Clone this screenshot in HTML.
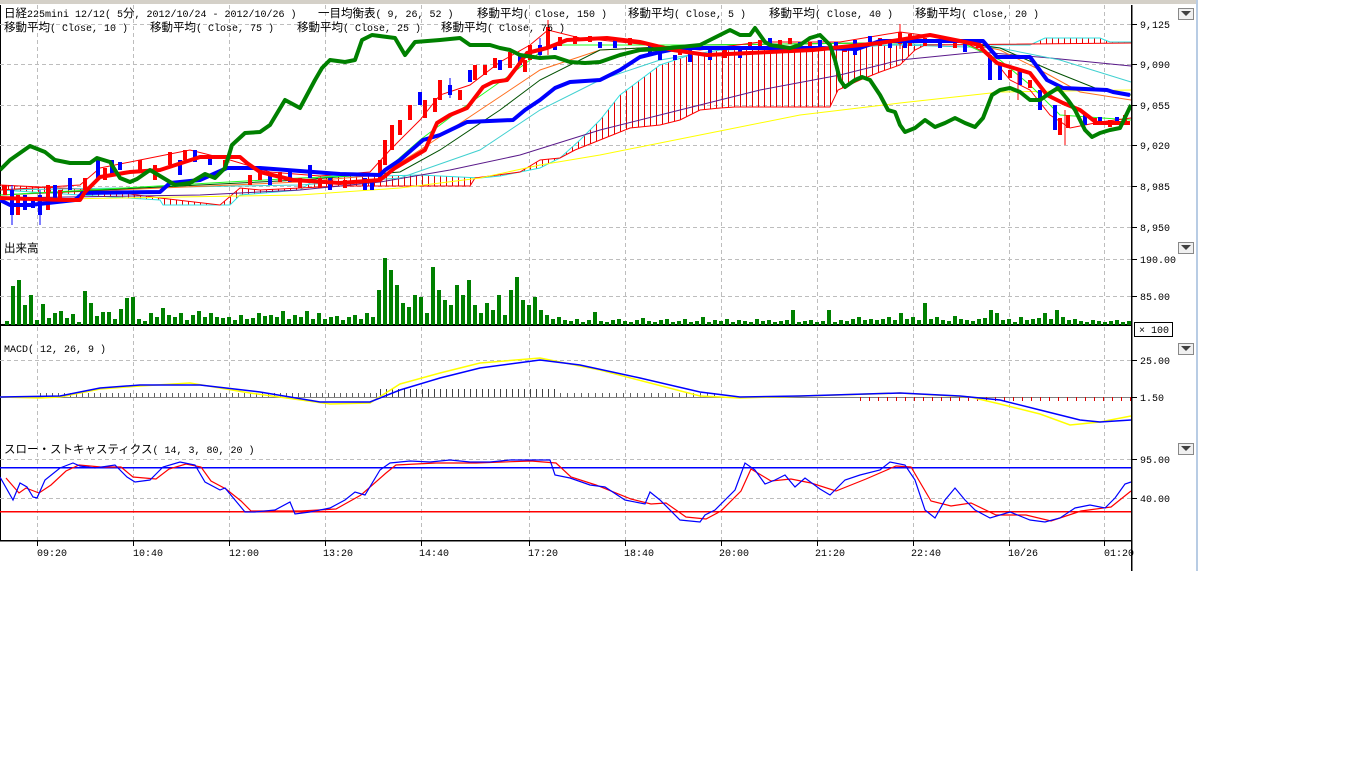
<!DOCTYPE html>
<html><head><meta charset="utf-8"><style>
html,body{margin:0;padding:0;background:#fff;width:1366px;height:768px;overflow:hidden}
svg{position:absolute;left:0;top:0}
.t{font-family:"Liberation Mono","Noto Sans CJK JP",monospace;font-size:10px;fill:#000}
.j{font-size:11.5px}
</style></head><body>
<svg width="1366" height="768" viewBox="0 0 1366 768" xmlns="http://www.w3.org/2000/svg">
<defs>
<pattern id="h" width="6" height="4" patternUnits="userSpaceOnUse"><rect x="2" y="0" width="1" height="4" fill="#e00000"/></pattern>
</defs>
<rect x="0" y="0" width="1196" height="4" fill="#d4d0c8"/>
<rect x="1196" y="0" width="2" height="571" fill="#b8cce4"/>
<rect x="0" y="5" width="1" height="536" fill="#000"/>
<g stroke="#bdbdbd" stroke-dasharray="4,3" stroke-width="1">
<path d="M0 24.5H1131M0 64.5H1131M0 105.5H1131M0 145.5H1131M0 186.5H1131M0 227.5H1131M0 259.5H1131M0 296.5H1131M0 360.5H1131M0 459.5H1131M0 498.5H1131"/>
<path d="M37.5 5V540M133.5 5V540M229.5 5V540M325.5 5V540M421.5 5V540M529.5 5V540M625.5 5V540M721.5 5V540M817.5 5V540M913.5 5V540M1009.5 5V540M1104.5 5V540"/>
</g>
<polygon fill="url(#h)" points="0,190 80,195 160,200 163,205 230,205 240,195 300,190 320,176 380,176 420,175 480,178 500,176 510,174 540,168 560,158 580,140 600,120 620,95 640,80 660,65 690,55 720,50 800,48 860,47 900,44 960,45 1000,45 1030,45 1045,38 1100,38 1110,42 1131,42 1131,43 925,45 915,50 900,65 880,72 860,80 838,90 830,107 735,107 720,108 700,110 680,120 660,125 630,128 600,140 575,150 560,158 540,160 520,172 475,178 470,186 340,186 300,188 260,190 240,188 220,205 160,198 100,190 0,185"/>
<polyline fill="none" stroke="#30e0e0" stroke-width="1" points="0,190 80,195 160,200 163,205 230,205 240,195 300,190 320,176 380,176 420,175 480,178 500,176 510,174 540,168 560,158 580,140 600,120 620,95 640,80 660,65 690,55 720,50 800,48 860,47 900,44 960,45 1000,45 1030,45 1045,38 1100,38 1110,42 1131,42"/>
<polyline fill="none" stroke="#f00" stroke-width="1" points="0,185 100,190 160,198 220,205 240,188 260,190 300,188 340,186 470,186 475,178 520,172 540,160 560,158 575,150 600,140 630,128 660,125 680,120 700,110 720,108 735,107 830,107 838,90 860,80 880,72 900,65 915,50 925,45 1131,43"/>
<g fill="none" stroke-width="1">
<polyline stroke="#ffff00" points="0,200 300,195 400,188 480,178 540,165 600,155 700,135 800,115 900,103 1000,92 1131,90"/>
<polyline stroke="#5a1a8a" points="0,198 200,195 300,190 380,182 450,170 520,155 600,130 680,110 760,90 840,75 900,60 980,52 1050,58 1131,66"/>
<polyline stroke="#40d0d0" points="0,190 300,185 400,178 480,150 540,110 600,80 660,60 720,50 900,45 1000,48 1060,60 1131,82"/>
<polyline stroke="#ff7020" points="0,195 300,182 380,175 420,150 480,110 540,70 600,50 700,45 960,42 1000,50 1040,70 1080,92 1131,100"/>
<polyline stroke="#005000" points="0,195 300,180 400,172 440,150 500,110 540,80 600,50 700,45 960,42 1000,48 1050,70 1100,90 1131,95"/>
<polyline stroke="#20ff20" points="0,195 300,178 380,175 420,140 460,110 510,75 550,45 700,45 960,42 1000,60 1030,85 1060,115 1131,120"/>
<polyline stroke="#f00" points="0,190 80,185 100,168 140,160 190,150 230,160 270,172 320,176 370,172 390,150 420,120 440,95 470,85 500,62 530,45 548,30 580,38 640,44 700,50 760,42 840,42 900,32 960,40 990,55 1010,80 1030,90 1050,115 1070,128 1100,122 1131,118"/>
</g>
<path fill="none" stroke="#0000ff" stroke-width="4" d="M12 190v25M25 195v15M33 200v8M40 195v20M55 185v15M70 178v12M98 160v18M112 160v15M120 162v8M180 160v15M195 150v12M210 155v10M270 175v10M290 170v12M310 165v13M330 178v12M365 178v12M372 182v8M420 92v13M450 85v10M470 70v12M500 60v10M520 55v10M540 45v10M555 45v5M600 42v6M615 40v8M650 43v12M660 48v12M675 55v5M690 50v12M710 50v10M740 48v10M770 38v7M800 42v8M820 40v6M836 42v8M855 40v15M870 36v6M890 42v6M905 40v8M940 42v6M965 42v10M990 55v25M1000 65v15M1020 70v15M1040 90v20M1055 105v25M1085 115v10M1100 117v8M1117 117v8"/>
<path fill="none" stroke="#0000ff" stroke-width="1" d="M12 185v40M40 190v35M450 78v20M540 38v20"/>
<path fill="none" stroke="#ff0000" stroke-width="4" d="M5 185v10M18 195v20M48 185v25M60 190v10M85 178v12M105 168v12M140 160v10M155 165v15M170 152v13M185 150v10M225 160v10M250 175v10M260 170v10M280 172v10M300 178v10M320 178v10M345 180v8M380 160v20M385 140v25M392 125v25M400 120v15M410 105v15M425 100v18M435 98v14M440 80v20M460 90v10M475 65v15M485 65v10M495 58v10M510 52v16M525 60v12M530 45v15M548 27v21M560 37v9M575 36v8M590 36v6M630 38v7M680 48v7M725 50v8M750 42v8M760 40v6M780 40v6M790 38v6M810 42v6M845 45v7M880 38v8M900 32v12M910 34v12M925 38v8M955 40v8M978 40v8M1010 70v8M1030 80v8M1060 118v17M1068 115v13M1095 118v7M1110 120v7M1125 115v10"/>
<path fill="none" stroke="#ff0000" stroke-width="1" d="M548 20v35M900 24v25M1065 110v35M1018 70v30"/>
<polyline fill="none" stroke="#0000ff" stroke-width="4" stroke-linejoin="round" points="0,200 10,205 30,205 75,200 83,193 160,192 170,183 200,180 227,168 260,168 340,174 380,175 385,170 400,160 423,140 440,135 467,122 513,120 525,110 540,100 555,88 570,82 600,80 620,70 640,57 660,52 680,48 820,48 857,49 880,41 983,41 997,57 1030,57 1047,80 1063,88 1107,90 1113,92 1130,95"/>
<polyline fill="none" stroke="#ff0000" stroke-width="4" stroke-linejoin="round" points="0,198 65,200 80,200 85,192 100,177 130,172 160,170 200,157 240,157 247,163 260,172 293,180 340,183 380,180 395,168 425,150 437,123 450,115 467,108 483,87 493,82 507,80 517,67 527,53 547,48 567,40 607,38 640,42 673,50 707,55 813,50 880,43 930,35 980,45 983,50 997,63 1030,73 1047,95 1063,103 1080,110 1097,123 1130,123"/>
<polyline fill="none" stroke="#008000" stroke-width="4" stroke-linejoin="round" points="0,170 10,160 30,146 45,152 55,160 70,163 90,163 97,158 110,162 120,178 130,182 137,179 150,170 160,176 175,185 190,183 205,174 215,178 225,168 232,145 245,133 260,132 270,125 285,100 300,108 315,80 322,68 330,60 345,62 355,60 362,40 372,35 395,38 405,55 415,42 440,40 460,38 470,45 490,45 500,48 510,50 520,55 540,58 555,57 570,62 585,63 600,62 620,55 640,50 660,49 700,45 730,30 740,35 750,35 755,28 765,42 770,45 790,48 800,45 810,38 820,35 830,45 835,60 840,80 845,87 855,80 862,77 870,80 880,95 888,110 895,112 900,125 905,132 915,128 925,120 935,127 945,123 955,118 965,123 975,127 983,118 992,95 1000,90 1010,88 1020,92 1030,100 1040,100 1050,93 1058,88 1068,100 1075,110 1085,130 1092,137 1100,133 1110,130 1120,128 1131,105"/>
<rect x="0" y="324" width="1131" height="2" fill="#000"/>
<path fill="none" stroke="#008000" stroke-width="4" d="M7 325v-4M13 325v-39M19 325v-45M25 325v-20M31 325v-30M37 325v-5M43 325v-21M49 325v-7M55 325v-12M61 325v-14M67 325v-7M73 325v-11M79 325v-3M85 325v-34M91 325v-22M97 325v-9M103 325v-13M109 325v-13M115 325v-6M121 325v-16M127 325v-27M133 325v-28M139 325v-6M145 325v-4M151 325v-12M157 325v-8M163 325v-17M169 325v-10M175 325v-8M181 325v-12M187 325v-5M193 325v-10M199 325v-14M205 325v-8M211 325v-12M217 325v-8M223 325v-7M229 325v-8M235 325v-5M241 325v-10M247 325v-6M253 325v-7M259 325v-12M265 325v-9M271 325v-10M277 325v-8M283 325v-14M289 325v-6M295 325v-10M301 325v-8M307 325v-14M313 325v-6M319 325v-12M325 325v-6M331 325v-8M337 325v-9M343 325v-5M349 325v-8M355 325v-10M361 325v-6M367 325v-12M373 325v-8M379 325v-35M385 325v-67M391 325v-55M397 325v-40M403 325v-22M409 325v-18M415 325v-30M421 325v-28M427 325v-12M433 325v-58M439 325v-35M445 325v-25M451 325v-20M457 325v-40M463 325v-30M469 325v-45M475 325v-20M481 325v-12M487 325v-22M493 325v-15M499 325v-30M505 325v-10M511 325v-35M517 325v-48M523 325v-25M529 325v-20M535 325v-28M541 325v-15M547 325v-10M553 325v-6M559 325v-8M565 325v-5M571 325v-4M577 325v-6M583 325v-3M589 325v-5M595 325v-13M601 325v-4M607 325v-3M613 325v-5M619 325v-6M625 325v-4M631 325v-3M637 325v-5M643 325v-7M649 325v-4M655 325v-3M661 325v-5M667 325v-6M673 325v-3M679 325v-4M685 325v-6M691 325v-3M697 325v-4M703 325v-8M709 325v-3M715 325v-5M721 325v-4M727 325v-6M733 325v-3M739 325v-5M745 325v-4M751 325v-3M757 325v-6M763 325v-4M769 325v-5M775 325v-3M781 325v-4M787 325v-5M793 325v-15M799 325v-3M805 325v-4M811 325v-5M817 325v-3M823 325v-4M829 325v-15M835 325v-3M841 325v-5M847 325v-4M853 325v-6M859 325v-8M865 325v-5M871 325v-6M877 325v-5M883 325v-6M889 325v-8M895 325v-5M901 325v-12M907 325v-6M913 325v-8M919 325v-5M925 325v-22M931 325v-6M937 325v-8M943 325v-5M949 325v-4M955 325v-9M961 325v-6M967 325v-5M973 325v-4M979 325v-6M985 325v-7M991 325v-15M997 325v-12M1003 325v-5M1009 325v-6M1015 325v-3M1021 325v-8M1027 325v-5M1033 325v-6M1039 325v-7M1045 325v-12M1051 325v-6M1057 325v-15M1063 325v-8M1069 325v-5M1075 325v-6M1081 325v-4M1087 325v-3M1093 325v-5M1099 325v-4M1105 325v-3M1111 325v-4M1117 325v-5M1123 325v-3M1129 325v-4"/>
<rect x="0" y="397" width="1131" height="1" fill="#808080"/>
<line x1="40" y1="395" x2="380" y2="395" stroke="#606060" stroke-width="4" stroke-dasharray="1,5"/>
<line x1="380" y1="393" x2="560" y2="393" stroke="#404040" stroke-width="8" stroke-dasharray="1,5"/>
<line x1="560" y1="395" x2="720" y2="395" stroke="#606060" stroke-width="4" stroke-dasharray="1,6"/>
<line x1="860" y1="399" x2="1131" y2="399" stroke="#e00000" stroke-width="4" stroke-dasharray="1,8"/>
<polyline fill="none" stroke="#ffff00" stroke-width="1.5" points="0,397 40,398 60,397 100,389 140,386 190,383 250,393 330,404 370,403 400,384 440,373 480,363 540,358 600,370 700,396 740,398 900,393 970,397 1000,404 1040,414 1070,425 1100,422 1131,416"/>
<polyline fill="none" stroke="#0000ff" stroke-width="1.5" points="0,397 60,396 100,388 140,385 200,385 260,392 320,402 370,402 400,390 440,378 480,368 540,360 580,365 640,378 700,392 740,397 800,396 900,393 960,396 1000,400 1040,410 1080,420 1100,422 1131,420"/>
<rect x="0" y="467" width="1131" height="1.5" fill="#0000ff"/>
<rect x="0" y="511" width="1131" height="1.5" fill="#ff0000"/>
<g transform="translate(6,1)"><polyline fill="none" stroke="#ff0000" stroke-width="1.2" points="0,477 13,492 20,487 33,492 45,484 60,470 73,464 95,466 115,466 127,476 150,478 163,468 180,463 195,466 205,480 220,488 235,500 245,510 275,510 295,510 330,508 355,494 380,472 390,464 430,462 470,462 525,460 550,462 565,476 590,484 625,498 645,503 660,502 680,516 700,518 715,510 735,490 745,468 765,480 785,478 805,482 830,490 860,478 890,465 905,466 925,500 945,505 965,502 990,514 1020,514 1045,520 1075,510 1105,506 1125,490"/></g>
<polyline fill="none" stroke="#0000ff" stroke-width="1.2" points="0,477 13,500 20,483 27,487 33,497 37,498 45,480 60,468 73,463 80,466 95,468 115,465 127,477 135,482 150,480 163,467 180,462 195,465 205,482 220,490 225,488 235,500 245,512 255,512 275,510 290,502 295,514 310,512 330,508 345,500 355,492 365,495 380,470 390,463 410,461 430,462 450,460 470,462 490,462 510,460 525,460 550,460 555,475 570,478 590,485 605,487 625,500 645,504 650,492 660,500 680,520 700,522 705,515 715,510 735,490 745,463 755,470 765,484 775,480 785,475 795,487 805,478 820,489 830,495 845,480 860,475 880,470 890,462 905,465 915,480 925,510 935,518 945,500 955,488 965,500 975,510 990,518 1010,512 1020,516 1030,520 1045,522 1060,518 1075,508 1090,505 1105,508 1115,498 1125,484 1131,482"/>
<rect x="0" y="540" width="1131" height="1.5" fill="#000"/>
<rect x="1131" y="5" width="1.5" height="566" fill="#000"/>
<path stroke="#000" stroke-width="1" d="M1131 24.5h6M1131 64.5h6M1131 105.5h6M1131 145.5h6M1131 186.5h6M1131 227.5h6M1131 259.5h6M1131 296.5h6M1131 360.5h6M1131 397.5h6M1131 459.5h6M1131 498.5h6M37.5 540v6M133.5 540v6M229.5 540v6M325.5 540v6M421.5 540v6M529.5 540v6M625.5 540v6M721.5 540v6M817.5 540v6M913.5 540v6M1009.5 540v6M1104.5 540v6"/>
<g class="t">
<text x="1140" y="28">9,125</text><text x="1140" y="68">9,090</text><text x="1140" y="109">9,055</text><text x="1140" y="149">9,020</text><text x="1140" y="190">8,985</text><text x="1140" y="231">8,950</text>
<text x="1140" y="263">190.00</text><text x="1140" y="300">85.00</text>
<text x="1140" y="364">25.00</text><text x="1140" y="401">1.50</text>
<text x="1140" y="463">95.00</text><text x="1140" y="502">40.00</text>
<text x="37" y="556">09:20</text><text x="133" y="556">10:40</text><text x="229" y="556">12:00</text><text x="323" y="556">13:20</text><text x="419" y="556">14:40</text><text x="528" y="556">17:20</text><text x="624" y="556">18:40</text><text x="719" y="556">20:00</text><text x="815" y="556">21:20</text><text x="911" y="556">22:40</text><text x="1008" y="556">10/26</text><text x="1104" y="556">01:20</text>
<text x="4" y="17"><tspan class="j">日経</tspan>225mini 12/12( 5<tspan class="j">分</tspan>, 2012/10/24 - 2012/10/26 )</text>
<text x="318" y="17"><tspan class="j">一目均衡表</tspan>( 9, 26, 52 )</text>
<text x="477" y="17"><tspan class="j">移動平均</tspan>( Close, 150 )</text>
<text x="628" y="17"><tspan class="j">移動平均</tspan>( Close, 5 )</text>
<text x="769" y="17"><tspan class="j">移動平均</tspan>( Close, 40 )</text>
<text x="915" y="17"><tspan class="j">移動平均</tspan>( Close, 20 )</text>
<text x="4" y="31"><tspan class="j">移動平均</tspan>( Close, 10 )</text>
<text x="150" y="31"><tspan class="j">移動平均</tspan>( Close, 75 )</text>
<text x="297" y="31"><tspan class="j">移動平均</tspan>( Close, 25 )</text>
<text x="441" y="31"><tspan class="j">移動平均</tspan>( Close, 75 )</text>
<text x="4" y="252" class="j">出来高</text>
<text x="4" y="352">MACD( 12, 26, 9 )</text>
<text x="4" y="453"><tspan class="j">スロー・ストキャスティクス</tspan>( 14, 3, 80, 20 )</text>
<text x="1139" y="333">× 100</text>
</g>
<rect x="1134.5" y="322.5" width="38" height="14" fill="none" stroke="#000"/>
<g>
<rect x="1178.5" y="8.5" width="15" height="11" fill="#f0f0f0" stroke="#888"/><path d="M1181 11h10l-5 5z" fill="#404040"/>
<rect x="1178.5" y="242.5" width="15" height="11" fill="#f0f0f0" stroke="#888"/><path d="M1181 245h10l-5 5z" fill="#404040"/>
<rect x="1178.5" y="343.5" width="15" height="11" fill="#f0f0f0" stroke="#888"/><path d="M1181 346h10l-5 5z" fill="#404040"/>
<rect x="1178.5" y="443.5" width="15" height="11" fill="#f0f0f0" stroke="#888"/><path d="M1181 446h10l-5 5z" fill="#404040"/>
</g>
</svg>
</body></html>
